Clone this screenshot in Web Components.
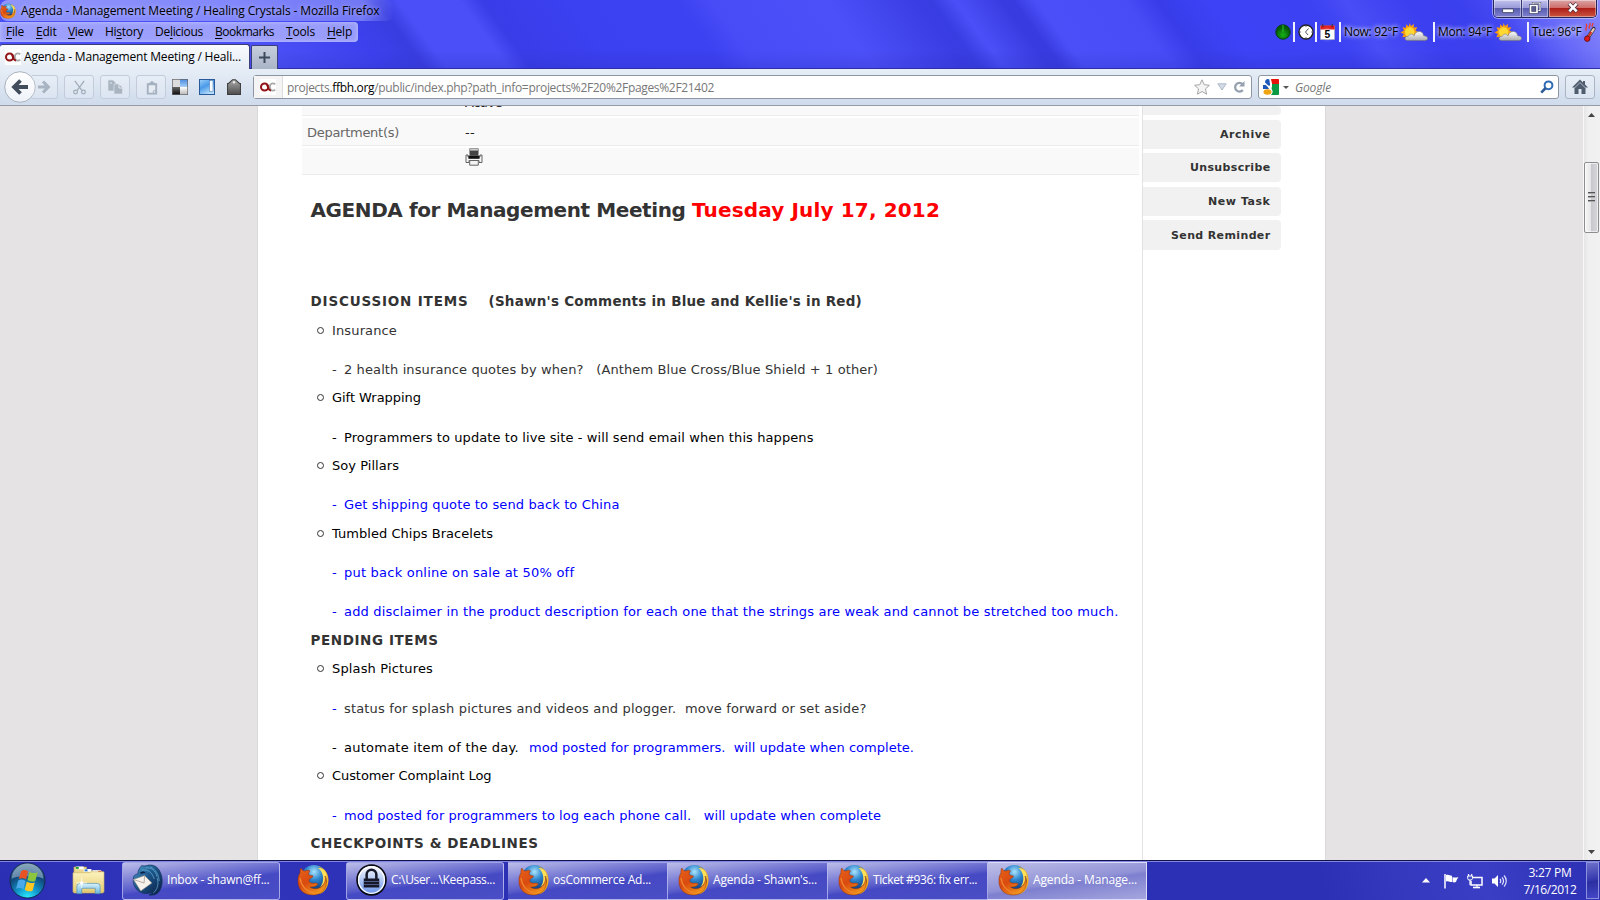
<!DOCTYPE html>
<html lang="en">
<head>
<meta charset="utf-8">
<title>Agenda - Management Meeting / Healing Crystals - Mozilla Firefox</title>
<style>
html,body{margin:0;padding:0;width:1600px;height:900px;overflow:hidden;background:#fff}
body{font-family:"Open Sans","Noto Sans",sans-serif;font-size:12px;color:#000}
</style>
</head>
<body>
<desktop-screen></desktop-screen>
<script>
const define=(name,html,setup)=>customElements.define(name,class extends HTMLElement{
  connectedCallback(){
    if(this.shadowRoot)return;
    const t=document.createElement('template');
    t.innerHTML=typeof html==='function'?html(this):html;
    this.attachShadow({mode:'open'}).appendChild(t.content.cloneNode(true));
    if(setup)setup(this);
  }
});

/* Text set to a given advance width by adjusting its tracking. */
define('fit-text',`<style>:host{display:inline-block;white-space:pre;flex:none}</style><span><slot></slot></span>`,el=>{
  const w=+el.getAttribute('w'),s=el.shadowRoot.querySelector('span');
  const n=el.textContent.length,cur=s.getBoundingClientRect().width;
  s.style.letterSpacing=((w-cur)/n)+'px';
  el.style.width=w+'px';
});

const icons={
firefox:['0 0 32 32',`<defs><radialGradient id="b" cx=".5" cy=".25" r=".75"><stop offset="0" stop-color="#a9e4fb"/><stop offset=".4" stop-color="#2f86cf"/><stop offset="1" stop-color="#0a2a66"/></radialGradient><linearGradient id="o" x1="0" y1="0" x2=".7" y2="1"><stop offset="0" stop-color="#e8631a"/><stop offset=".5" stop-color="#d94a10"/><stop offset="1" stop-color="#f39a1d"/></linearGradient></defs>
<circle cx="17" cy="14.500" r="13.500" fill="url(#b)"/><path d="M20 2c6 2 9 6 9.500 12 .5 9-5 15-13 15 9 4 15-5 15-13C31.500 9 27 3 20 2z" fill="#f6b21c"/><path d="M21 4c6 4 7 14 2 19 5-2 8-8 6-14-1-3-4-5-8-5z" fill="#ffe05a"/>
<path d="M4 4c1 2 2 3 4 3 2-1 4-1 5 0-1 1-2 3-1 4l4 1c0 2-3 2-4 4 0 2 1 3 3 3 2 1 3-1 6 1-2 3-6 3-8 3 4 3 10 2 13-2 2-3 3-5 2-9 4 9-1 19-12 19C5 31 .5 24 1 16c0-4 1-5 2-7 0-2 0-4 1-5z" fill="url(#o)" stroke="#8f2c08" stroke-width=".5"/><path d="M3 14c1 7 5 13 14 15" fill="none" stroke="#f58b34" stroke-width="1.200"/>`],
oc:['0 0 16 16',`<rect width="16" height="16" fill="#fff"/><path d="M15.300 5.300C13 3.600 9.800 4.300 9.800 8s3.200 4.400 5.500 2.700" fill="none" stroke="#aaa" stroke-width="1.900"/><ellipse cx="4.600" cy="8" rx="3.600" ry="3.500" fill="none" stroke="#921417" stroke-width="2"/><path d="M7 5.500c1 2.500 1.200 6 4 6" fill="none" stroke="#921417" stroke-width="1.900"/>`],
back:['0 0 32 32',`<defs><linearGradient id="g" x2="0" y2="1"><stop stop-color="#fff"/><stop offset="1" stop-color="#eef2f8"/></linearGradient></defs><circle cx="16" cy="16" r="15.300" fill="url(#g)" stroke="#aab2bf"/><path d="M24 16H10M16.500 9.500L10 16l6.500 6.500" fill="none" stroke="#414d5c" stroke-width="3.800"/>`],
fwd:['0 0 12 14',`<path d="M0 7h9M5 1.500L10.300 7 5 12.500" fill="none" stroke="#a8b4c2" stroke-width="3.200"/>`],
cut:['0 0 16 16',`<g fill="none" stroke="#9fabb9" stroke-width="1.300"><path d="M3 1l7.500 10M13 1L5.500 11"/><circle cx="3.800" cy="12.800" r="2"/><circle cx="12.200" cy="12.800" r="2"/></g>`],
copy:['0 0 16 16',`<g fill="#a9b4c1" stroke="#dde4ee" stroke-width=".7"><path d="M1 1h5l3 3v8H1z"/><path d="M7 5h5l3.500 3.500V15H7z"/></g><path d="M12 5v4h3.500M3 4h2" stroke="#e4eaf2" fill="none"/>`],
paste:['0 0 16 16',`<path d="M4 4.500h9v10H4z" fill="#e6ecf4" stroke="#a5b0be" stroke-width="2"/><path d="M5 4c0-1 1-1 2-1.500C7 .8 10 .8 10 2.500c1 .5 2 .5 2 1.500v1H5z" fill="#a5b0be"/><path d="M10 14.500v-3h3" fill="none" stroke="#a5b0be"/>`],
deli:['0 0 16 16',`<defs><linearGradient id="a" x2="0" y2="1"><stop stop-color="#fff"/><stop offset="1" stop-color="#bbb"/></linearGradient><linearGradient id="c" x2="0" y2="1"><stop stop-color="#4f8ee0"/><stop offset="1" stop-color="#a6d0fa"/></linearGradient><linearGradient id="d" x2="0" y2="1"><stop stop-color="#666"/><stop offset="1" stop-color="#111"/></linearGradient></defs><path d="M0 0h16v16H0z" fill="#666"/><path d="M.7.7H8V8H.7z" fill="#dcdcdc"/><path d="M8 .7h7.300V8H8z" fill="url(#c)"/><path d="M.7 8H8v7.300H.7z" fill="url(#d)"/><path d="M8 8h7.300v7.300H8z" fill="url(#a)"/>`],
side:['0 0 16 16',`<defs><linearGradient id="a" x2=".5" y2="1"><stop stop-color="#9fd0fa"/><stop offset=".5" stop-color="#4a9ae8"/><stop offset="1" stop-color="#b5dcfa"/></linearGradient></defs><rect x=".5" y=".5" width="15" height="15" fill="url(#a)" stroke="#27599b"/><rect x="10.500" y="1.500" width="3.500" height="11" fill="#f4faff" stroke="#3b6fae" stroke-width=".5"/>`],
tag:['0 0 15 16',`<defs><linearGradient id="a" x2="0" y2="1"><stop stop-color="#aaa"/><stop offset="1" stop-color="#4c4c4c"/></linearGradient></defs><path d="M.6 4.500h1L6 .7h3l4.400 3.800h1v11H.6z" fill="url(#a)" stroke="#3c3c3c" stroke-width="1.100"/><circle cx="7.500" cy="3.300" r="1.200" fill="#eee"/>`],
star:['0 0 16 16',`<path d="M8 .8l2.200 4.900 5.200.6-3.900 3.600 1.100 5.300L8 12.500l-4.600 2.700 1.100-5.300L.6 6.300l5.200-.6z" fill="#f4f4f4" stroke="#a6a6a6"/>`],
dd:['0 0 10 8',`<path d="M.8.800h8.400L5 7z" fill="#d2dbe6" stroke="#a8b4c4" stroke-width=".9"/>`],
reload:['0 0 12 12',`<path d="M9.500 3.200A4.300 4.300 0 1 0 9.800 9" fill="none" stroke="#94a0ae" stroke-width="2.300"/><path d="M11.500 0v5.500H6z" fill="#94a0ae"/>`],
google:['0 0 16 16',`<rect width="16" height="16" fill="#fff"/><path d="M8 0h7c.6 0 1 .4 1 1v4H9z" fill="#e8120c"/><path d="M9 5h7v10c0 .6-.4 1-1 1H8c4-4-1-6 1-8z" fill="#0b9a43"/><path d="M0 6h4l2 4H0z" fill="#1d58b8"/><ellipse cx="5" cy="3.500" rx="3" ry="3.600" fill="#1d58b8"/><path d="M2 4c2 4 4 2 5 6M7 0l1 7" stroke="#fff" stroke-width="1.500" fill="none"/><ellipse cx="4.500" cy="13" rx="4" ry="2.700" fill="#efa414"/>`],
caret:['0 0 6 3',`<path d="M0 0h6L3 3z" fill="#555"/>`],
mag:['0 0 14 14',`<circle cx="8.500" cy="5.300" r="3.900" fill="none" stroke="#2f6cb4" stroke-width="2"/><path d="M5.700 8L1.200 12.600" stroke="#2f5a94" stroke-width="2.600"/>`],
home:['0 0 16 16',`<path d="M8 .5L0 8.500h2.500V15h4v-5h3v5h4V8.500H16l-3-3V2h-2v1.500z" fill="#4f5d6e"/><path d="M8 3.500L2.500 9M8 3.500L13.500 9" stroke="#c3ccd7" stroke-width=".8" fill="none"/>`],
green:['0 0 16 16',`<defs><radialGradient id="a" cy=".7"><stop stop-color="#16b416"/><stop offset="1" stop-color="#055c08"/></radialGradient></defs><circle cx="8" cy="8" r="7.200" fill="url(#a)" stroke="#053f12"/><path d="M8 8V1" stroke="#2fc42f" stroke-width="1"/>`],
clock:['0 0 16 16',`<circle cx="8" cy="8" r="7" fill="#fff" stroke="#222" stroke-width="1.300"/><path d="M10.500 4.500L7.500 8l2.500 3" fill="none" stroke="#555"/><g fill="#666"><path d="M7.500 2h1v1h-1zM7.500 13h1v1h-1zM2 7.500h1v1H2zM13 7.500h1v1h-1z"/></g>`],
cal:['0 0 16 16',`<rect x=".5" y="2" width="15" height="13.500" fill="#fff" stroke="#aaa" stroke-width=".6"/><path d="M.5 1.500h15v4H.5z" fill="#e01616"/><path d="M3 0v3M13 0v3" stroke="#333"/><text x="8" y="14" font-size="11" font-weight="700" text-anchor="middle" font-family="Liberation Sans,sans-serif">5</text>`],
sun:['0 0 30 20',`<defs><linearGradient id="a" x2="0" y2="1"><stop stop-color="#fff"/><stop offset="1" stop-color="#aaa"/></linearGradient></defs><path d="M10 0l1.300 3.200L14.500 1l-.3 3.700L18 4.500 16 8l3.500 2-3.500 2 1 3.500-3.500-.8L12 18l-2.500-2.700L6.500 18 6 14.500l-3.700.5L4 11.700.5 10 4 8 2.500 4.600l3.600.3L6.500 1.300 9 3.700z" fill="#f79d12"/><circle cx="10" cy="9.500" r="5" fill="#ffd931"/><path d="M8 18.500c-4 0-3.500-5 .5-4.500 1-3 5-3 6-.5 1.500-6 9.500-6 10 0 5 0 5.500 5 1 5z" fill="url(#a)" stroke="#777" stroke-width=".6"/>`],
thermo:['0 0 13 20',`<path d="M2.500 8c-2-3 2-4 0-7M6 6c-2-2 1.500-3 .5-6M9 4c-1-1 1-2 .5-4" fill="none" stroke="#f13a24" stroke-width="1.400"/><path d="M3.500 16.500L10.500 6" stroke="#333" stroke-width="4" stroke-linecap="round"/><path d="M4 15.500L10.500 6.500" stroke="#f0c8b8" stroke-width="2.400" stroke-linecap="round"/><path d="M4 15.500l4-6" stroke="#d8241b" stroke-width="2"/><circle cx="3.500" cy="16.500" r="2.900" fill="#e31818" stroke="#611"/>`],
printer:['0 0 18 18',`<path d="M4.700.7h8.600v6H4.700z" fill="#ddd" stroke="#888"/><path d="M5 2.500h8v5H5z" fill="#444"/><path d="M1 7h2v2h12V7h2v7.500h-3v-2H4v2H1z" fill="#f4f4f4" stroke="#555" stroke-width=".9"/><path d="M3.500 7.500h11v3.300h-11z" fill="#111"/><path d="M4.700 12.500h8.600v4.700H4.700z" fill="#f4f4f4" stroke="#666"/>`],
orb:['0 0 38 38',`<defs><radialGradient id="a" cx=".5" cy="1" r=".95"><stop stop-color="#2ff0ff"/><stop offset=".35" stop-color="#1197cc"/><stop offset=".7" stop-color="#11497d"/><stop offset="1" stop-color="#4b7a9a"/></radialGradient></defs><circle cx="19" cy="19" r="18" fill="url(#a)" stroke="#13284c"/><path d="M3 17a16 15.500 0 0 1 32 0c-6-3-26-3-32 0z" fill="#fff" opacity=".33"/><path d="M12.500 9.500c2-2 5-1.500 7 0l-2 8.500c-2-1.500-5-2-7.500-.5z" fill="#ea5223"/><path d="M21 10c2 1.500 5 2 8.500.5l-2.500 9c-2.500 1-5.500.5-8-1z" fill="#8cc63c"/><path d="M9.500 19c2.500-1.500 5-1 7.500.5l-2.200 8.500c-2-1.500-5-2-7.500-.5z" fill="#4aa9ea"/><path d="M18.300 20c2.500 1.500 5 2 8.200 1l-2.300 8.500c-2.500 1.200-6 .5-8-1z" fill="#fcc623"/>`],
folder:['0 0 34 32',`<defs><linearGradient id="a" x2="0" y2="1"><stop stop-color="#fcf3bd"/><stop offset="1" stop-color="#e6cc74"/></linearGradient><linearGradient id="b" x2="0" y2="1"><stop stop-color="#d9f2fb"/><stop offset="1" stop-color="#6cb5dd"/></linearGradient></defs><path d="M2 2h13v4h15l2 3v20H2z" fill="#ead78d" stroke="#b39c50" stroke-width=".6"/><path d="M4 1.500h8v3H4zM12 4h8v3h-8zM21 5.500h9v3h-9z" fill="#fff"/><path d="M4 2h3v2H4z" fill="#1aa02b"/><path d="M13 4.500h3v2h-3z" fill="#2474d8"/><path d="M27 6h3v2h-3z" fill="#d83a24"/><path d="M1 8h17l2-1h13v21H1z" fill="url(#a)" stroke="#c8b062" stroke-width=".6"/><path d="M5 29.500V22q0-3 3-3h18q3 0 3 3v7.500h-5V24H10v5.500z" fill="url(#b)" stroke="#4e93bd" stroke-width=".7"/><path d="M10 13v11M4.500 18.500h11" stroke="#fff" stroke-width=".8"/><circle cx="10" cy="18.500" r="1.800" fill="#fff"/>`],
bird:['0 0 32 32',`<defs><linearGradient id="a" x2="1" y2="1"><stop stop-color="#4f9fd0"/><stop offset=".45" stop-color="#1b5488"/><stop offset="1" stop-color="#0a1b40"/></linearGradient></defs><path d="M10 1.500c2 .5 3 .5 5 0C21 0 27 2 29.500 9c4 9 0 18-3 20-2 2-6 2.500-9 2 2-1 3-2 3-3-6 3-12 1-15-2C2 23 0 17 2 12c1-1 2-2 4-2 0-4 2-6 4-8.500z" fill="url(#a)" stroke="#0c2c54" stroke-width=".6"/><path d="M14 4c6-1 10 2 12 9M19 3c5 2 9 8 9 14M10 6c7-1 11 3 13 9M26 14c2 6 0 12-4 15" fill="none" stroke="#6bb4dc" stroke-width=".7"/><path d="M1.500 15.500L13 11.500 20.500 19 9 27z" fill="#f7f2ec" stroke="#8f8880" stroke-width=".6"/><path d="M1.500 15.500l11 3.500.5-7.500" fill="none" stroke="#a59c92" stroke-width=".8"/><path d="M8 9c2-2 5-2 6 0-2 0-4 1.500-6 0z" fill="#0b2148"/>`],
lock:['0 0 32 32',`<defs><linearGradient id="a" x2="0" y2="1"><stop stop-color="#fff"/><stop offset="1" stop-color="#648fea"/></linearGradient></defs><circle cx="16" cy="16" r="14.900" fill="url(#a)" stroke="#0a0a12" stroke-width="1.700"/><circle cx="16" cy="16" r="13.300" fill="none" stroke="#fff" stroke-width="1.300"/><path d="M11 15v-4.500a5 4.800 0 0 1 10 0V15" fill="none" stroke="#17192b" stroke-width="2.600"/><path d="M8 14.500h16v9H8z" fill="#17192b"/><path d="M8 17.500h16M8 20.500h16" stroke="#667cb0" stroke-width=".7"/>`],
up:['0 0 8 5',`<path d="M4 0L8 4.500H0z" fill="#fff"/>`],
sup:['0 0 7 4',`<path d="M3.500 0L7 4H0z" fill="#444"/>`],
sdown:['0 0 7 4',`<path d="M0 0h7L3.500 4z" fill="#444"/>`],
flag:['0 0 16 16',`<path d="M2 1v14.500" stroke="#fff" stroke-width="1.500"/><path d="M3 2c3-1 4 1 6 .7V9c-2 .3-3-1.500-6-.5zM9.500 4c2 1 4 .5 6 0-1.500 2-2 3.500-2.500 5-1.500.5-2.500.5-3.500 0z" fill="#fff"/>`],
net:['0 0 16 16',`<path d="M6 4.500h9v7.500H4V8" fill="none" stroke="#fff" stroke-width="1.500"/><path d="M6 14.500h7" stroke="#fff" stroke-width="1.600"/><path d="M10 12v2M3 6.500V12M1.500 1v2.500M4.700 1v2.500" stroke="#fff" stroke-width="1.200"/><path d="M.7 3h4.800v2.500L4.500 7h-3L.7 5.500z" fill="#4450c4" stroke="#fff"/>`],
vol:['0 0 16 16',`<path d="M1 5.500h2.500L7 2v12l-3.500-3.500H1z" fill="#fff"/><path d="M9 6c1 1 1 3 0 4M11 4.300c2 2 2 5.400 0 7.400M13 2.500c3 3 3 8 0 11" fill="none" stroke="#e5e6ff" stroke-width="1.200"/>`],
min:['0 0 12 6',`<rect x=".6" y=".9" width="10.800" height="3.800" rx=".5" fill="#fff" stroke="#44476a" stroke-width="1"/>`],
rest:['0 0 12 12',`<path d="M4 1h7v7.500H4z" fill="none" stroke="#3a3d60" stroke-width="2.200"/><path d="M4 1h7v7.500H4z" fill="none" stroke="#fff" stroke-width="1.200"/><path d="M1.500 3.500h6.500v7H1.500z" fill="#5a5d8e" stroke="#3a3d60" stroke-width="2.800"/><path d="M1.500 3.500h6.500v7H1.500z" fill="none" stroke="#fff" stroke-width="1.700"/>`],
close:['0 0 12 11',`<path d="M2 1.500l8 8M10 1.500l-8 8" stroke="#5b3540" stroke-width="4.200"/><path d="M2.300 1.700l7.400 7.600M9.700 1.700L2.300 9.300" stroke="#fff" stroke-width="2.600"/>`]
};
define('ui-icon',el=>{
  const [vb,body]=icons[el.getAttribute('n')];
  return `<style>:host{display:block;flex:none;width:${el.getAttribute('w')}px;height:${el.getAttribute('h')||el.getAttribute('w')}px}svg{display:block;width:100%;height:100%;overflow:visible}</style><svg viewBox="${vb}" preserveAspectRatio="none">${body}</svg>`;
});

define('title-bar',`<style>
:host{display:flex;height:21px;justify-content:space-between}
.t{display:flex;align-items:center;gap:5px;height:21px;padding-right:14px;border-radius:8px;background:linear-gradient(90deg,rgba(190,195,255,.6),rgba(165,170,255,.52) 92%,rgba(160,165,255,0));text-shadow:0 0 5px rgba(255,255,255,.5)}
.w{display:flex;margin-right:3px;height:18px;border:1px solid #24265a;border-top:0;border-radius:0 0 5px 5px;box-shadow:0 0 0 1px rgba(220,222,255,.55);overflow:hidden;box-sizing:border-box}
.w div{display:flex;justify-content:center;align-items:center;background:linear-gradient(#c1c2ee,#9a9bd8 45%,#5a5cae 50%,#7f81d0);box-shadow:inset 0 0 0 1px rgba(255,255,255,.4)}
.w .a{width:27px;border-right:1px solid #34366e}.w .b{width:26px;border-right:1px solid #34366e}.w .c{width:47px;background:linear-gradient(#dba5a8,#cf6d68 45%,#ad1f18 50%,#cc5540)}
.a ui-icon{margin-top:4px}.b ui-icon{margin-top:-2px}.c ui-icon{margin-top:-2px}
</style><div class="t"><ui-icon n="firefox" w="16"></ui-icon><fit-text w="358.500">Agenda - Management Meeting / Healing Crystals - Mozilla Firefox</fit-text></div>
<div class="w"><div class="a"><ui-icon n="min" w="12" h="6"></ui-icon></div><div class="b"><ui-icon n="rest" w="12"></ui-icon></div><div class="c"><ui-icon n="close" w="12" h="11"></ui-icon></div></div>`);

define('menu-bar',`<style>
:host{display:flex;height:20px;margin-top:1px;justify-content:space-between;align-items:center}
nav{display:flex;align-items:center;height:20px;box-sizing:border-box;width:358px;padding:0 0 2px 6px;border-radius:0 4px 4px 0;background:rgba(205,208,255,.63);box-shadow:inset 0 0 4px rgba(255,255,255,.4)}
u{text-underline-offset:2px}
.s{display:flex;align-items:center;height:20px;width:325px;text-shadow:0 0 5px #fff,0 0 4px rgba(255,255,255,.7)}
.s fit-text{margin-top:-1px}
i{flex:none;width:2px;height:20px;background:#f0f0ff}
</style><nav>
<fit-text w="18"><u>F</u>ile</fit-text><fit-text w="20.500" style="margin-left:12px"><u>E</u>dit</fit-text><fit-text w="25" style="margin-left:11.500px"><u>V</u>iew</fit-text><fit-text w="38" style="margin-left:12px">Hi<u>s</u>tory</fit-text><fit-text w="48" style="margin-left:12px">De<u>l</u>icious</fit-text><fit-text w="59" style="margin-left:12px"><u>B</u>ookmarks</fit-text><fit-text w="29" style="margin-left:12px"><u>T</u>ools</fit-text><fit-text w="25" style="margin-left:12px"><u>H</u>elp</fit-text></nav>
<div class="s"><ui-icon n="green" w="16"></ui-icon><i style="margin:0 3px 0 2px"></i><ui-icon n="clock" w="16"></ui-icon><i style="margin:0 3px 0 1px"></i><ui-icon n="cal" w="15" h="16"></ui-icon><i style="margin:0 3px 0 4px"></i><fit-text w="54">Now: 92°F</fit-text><ui-icon n="sun" w="29" h="19" style="margin-left:2px"></ui-icon><i style="margin:0 3px 0 4px"></i><fit-text w="54">Mon: 94°F</fit-text><ui-icon n="sun" w="29" h="19" style="margin-left:2px"></ui-icon><i style="margin:0 3px 0 4px"></i><fit-text w="49.500">Tue: 96°F</fit-text><ui-icon n="thermo" w="12" h="19" style="margin-left:2px"></ui-icon></div>`);

define('tab-strip',`<style>
:host{display:flex;height:26px;margin-top:1px;align-items:flex-end;box-shadow:inset 0 -1px #2c2fa6}
.t{display:flex;align-items:center;gap:3px;width:250px;height:25px;box-sizing:border-box;padding-left:5px;border:1px solid #3b3e79;border-left:0;border-bottom:0;border-radius:3px 3px 0 0;background:linear-gradient(#f9fbfd,#e5ecf5)}
.t fit-text{margin-top:-1px}
.n{display:flex;align-items:center;justify-content:center;width:27px;height:24px;margin-left:1px;box-sizing:border-box;border:1px solid #3b3e79;border-bottom:0;background:linear-gradient(#c6cedd,#a9b4c7);border-radius:2px 2px 0 0}
</style><div class="t"><ui-icon n="oc" w="16"></ui-icon><fit-text w="217">Agenda - Management Meeting / Heali...</fit-text></div><div class="n"><svg width="11" height="11"><path d="M5.500 0v11M0 5.500h11" stroke="#3d4a5b" stroke-width="2"/></svg></div>`);

define('nav-bar',`<style>
:host{display:flex;align-items:center;height:37px;box-sizing:border-box;border-bottom:1px solid #979ba5;background:linear-gradient(#e6edf6,#cfdbec);color:#777}
.k{display:flex;align-items:center;justify-content:center;width:30px;height:24px;box-sizing:border-box;border:1px solid #c3ccda;border-radius:3px;background:rgba(255,255,255,.18);flex:none}
.f{width:26px;border-left:0;border-radius:0 3px 3px 0;margin-left:-4px;padding-right:2px}
.u{display:flex;align-items:center;height:24px;box-sizing:border-box;border:1px solid #8f96a3;border-radius:3px;background:#fff;flex:none}
.o{display:flex;align-items:center;justify-content:center;width:29px;height:22px;background:#f4f4f4;border-right:1px solid #ddd;box-sizing:border-box}
b{font-weight:400;color:#000}
</style><ui-icon n="back" w="32" style="margin-left:4px"></ui-icon><div class="k f"><ui-icon n="fwd" w="12" h="14"></ui-icon></div>
<div class="k" style="margin-left:6px"><ui-icon n="cut" w="15"></ui-icon></div><div class="k" style="margin-left:6px"><ui-icon n="copy" w="16"></ui-icon></div><div class="k" style="margin-left:6px"><ui-icon n="paste" w="15"></ui-icon></div>
<ui-icon n="deli" w="16" style="margin-left:6px"></ui-icon><ui-icon n="side" w="16" style="margin-left:11px"></ui-icon><ui-icon n="tag" w="14" h="16" style="margin-left:12px"></ui-icon>
<div class="u" style="margin-left:12px;width:999px"><div class="o"><ui-icon n="oc" w="16"></ui-icon></div><fit-text w="427" style="margin-left:4px">projects.<b>ffbh.org</b>/public/index.php?path_info=projects%2F20%2Fpages%2F21402</fit-text>
<ui-icon n="star" w="16" style="margin-left:auto"></ui-icon><ui-icon n="dd" w="10" h="8" style="margin-left:7px"></ui-icon><ui-icon n="reload" w="12" style="margin:0 6px 0 6px"></ui-icon></div>
<div class="u" style="margin-left:6px;width:301px"><ui-icon n="google" w="16" style="margin-left:4px"></ui-icon><ui-icon n="caret" w="6" h="3" style="margin-left:4px"></ui-icon><fit-text w="36" style="margin-left:6px;font-style:italic">Google</fit-text><ui-icon n="mag" w="14" style="margin:0 4px 0 auto"></ui-icon></div>
<div class="k" style="margin-left:6px;border-color:#aab4c4"><ui-icon n="home" w="16"></ui-icon></div>`);

define('browser-chrome',`<style>
:host{display:block;height:106px;overflow:hidden;font-size:12px;background:
linear-gradient(54deg,rgba(150,150,255,0) 35%,rgba(150,150,255,.75)) 1480px 0/120px 70px no-repeat,
linear-gradient(180deg,rgba(40,45,180,0) 50px,rgba(40,45,180,.22) 69px),
linear-gradient(54deg,#4b50f6 0,#4b50f6 250px,#3c41ee 330px,#383de0 366px,#4a4ff7 384px,#4a4ff7 434px,#393de8 452px,#3b40f0 520px,#3c41f1 608px,#474cf7 636px,#4c50f8 730px,#393de3 803px,#383de2 815px,#4a4ff7 835px,#383ce0 872px,#383ce0 882px,#4a4ff8 900px,#474cf7 972px,#383de9 998px,#3d42f6 1040px,#3c41f2 1120px,#484df6 1150px,#3b3fef 1200px,#3b40ee 1240px,#4f53f5 1300px,#6063f4)}
</style><title-bar></title-bar><menu-bar></menu-bar><tab-strip></tab-strip><nav-bar></nav-bar>`);

define('side-button',el=>`<style>:host{display:flex;align-items:center;justify-content:flex-end;height:${el.getAttribute('h')||29}px;width:138px;box-sizing:border-box;padding-right:10.500px;background:#f1f1f1;border-radius:0 4px 4px 0;font:bold 11px "DejaVu Sans",sans-serif;color:#333}</style><slot></slot>`);

define('info-row',`<style>:host{display:flex;box-sizing:border-box;padding-left:5px;background:#f9f9f9;border-bottom:1px solid #ececec;color:#666}.l{width:158px;flex:none}.v{color:#222}</style><div class="l"><slot name="label"></slot></div><div class="v"><slot></slot></div>`);

/* h: distance from the previous baseline; level: 0 heading, 1 bullet, 2 note with a leading dash */
define('agenda-line',el=>{
  const l=el.getAttribute('level'),c=el.getAttribute('color')||'#000';
  const lead=l==='1'?'<i></i>':l==='2'?'<fit-text class="d" w="12">- </fit-text>':'';
  return `<style>:host{display:flex;align-items:flex-end;height:${el.getAttribute('h')}px;line-height:20px;white-space:pre;color:${l==='0'?'#333':c};font-weight:${l==='0'?700:400};font-size:${l==='0'?13.5:13}px;padding-left:${l==='0'?0:l==='1'?6.5:21.5}px}
i{flex:none;width:5px;height:5px;border:1px solid #333;border-radius:50%;margin:0 8px 7px 0}.d{color:${el.getAttribute('dash')||c}}</style>${lead}<slot></slot>`;
});

define('page-main',`<style>
:host{display:block;width:1069px;box-sizing:border-box;background:#fff;border-left:1px solid #d9d9d9;border-right:1px solid #dadada;overflow:hidden;font:13px "DejaVu Sans",sans-serif}
.c{display:flex}
.l{width:885px;box-sizing:border-box;padding-left:44px;border-right:1px solid #e2e2e2;height:754px;overflow:hidden}
.t{width:837px;display:flex;flex-direction:column;gap:2px}
.g{padding-left:8.500px}
h1{margin:0;height:49px;display:flex;align-items:flex-end;font-size:20px;line-height:28px;color:#333}
em{font-style:normal;color:#f00}
.r{display:flex;flex-direction:column;gap:5px}
.x{display:block;margin-top:-11px;line-height:16px}
</style><div class="c"><div class="l"><div class="t">
<info-row style="height:10px"><fit-text class="x" w="37">Active</fit-text></info-row>
<info-row style="height:28px;line-height:29px"><fit-text slot="label" w="92">Department(s)</fit-text><fit-text w="10">--</fit-text></info-row>
<info-row style="height:27px"><ui-icon n="printer" w="18"></ui-icon></info-row></div>
<div class="g"><h1><fit-text w="381.500">AGENDA for Management Meeting </fit-text><em><fit-text w="248">Tuesday July 17, 2012</fit-text></em></h1>
<agenda-line level="0" h="87"><fit-text w="158">DISCUSSION ITEMS</fit-text><fit-text w="373.500" style="margin-left:20px">(Shawn's Comments in Blue and Kellie's in Red)</fit-text></agenda-line>
<agenda-line level="1" h="30" color="#333"><fit-text w="65">Insurance</fit-text></agenda-line>
<agenda-line level="2" h="39" color="#333"><fit-text w="534">2 health insurance quotes by when?   (Anthem Blue Cross/Blue Shield + 1 other)</fit-text></agenda-line>
<agenda-line level="1" h="28"><fit-text w="89">Gift Wrapping</fit-text></agenda-line>
<agenda-line level="2" h="40"><fit-text w="469.500">Programmers to update to live site - will send email when this happens</fit-text></agenda-line>
<agenda-line level="1" h="28"><fit-text w="67">Soy Pillars</fit-text></agenda-line>
<agenda-line level="2" h="39" color="#00f"><fit-text w="275.500">Get shipping quote to send back to China</fit-text></agenda-line>
<agenda-line level="1" h="29"><fit-text w="161">Tumbled Chips Bracelets</fit-text></agenda-line>
<agenda-line level="2" h="39" color="#00f"><fit-text w="230">put back online on sale at 50% off</fit-text></agenda-line>
<agenda-line level="2" h="39" color="#00f"><fit-text w="774.500">add disclaimer in the product description for each one that the strings are weak and cannot be stretched too much.</fit-text></agenda-line>
<agenda-line level="0" h="28"><fit-text w="128">PENDING ITEMS</fit-text></agenda-line>
<agenda-line level="1" h="29"><fit-text w="101">Splash Pictures</fit-text></agenda-line>
<agenda-line level="2" h="40" color="#333" dash="#00f"><fit-text w="522.500">status for splash pictures and videos and plogger.  move forward or set aside?</fit-text></agenda-line>
<agenda-line level="2" h="39"><fit-text w="175">automate item of the day.</fit-text><fit-text w="385" style="margin-left:10px;color:#00f">mod posted for programmers.  will update when complete.</fit-text></agenda-line>
<agenda-line level="1" h="28"><fit-text w="159.500">Customer Complaint Log</fit-text></agenda-line>
<agenda-line level="2" h="40" color="#00f"><fit-text w="537">mod posted for programmers to log each phone call.   will update when complete</fit-text></agenda-line>
<agenda-line level="0" h="27"><fit-text w="228">CHECKPOINTS &amp; DEADLINES</fit-text></agenda-line>
</div></div>
<div class="r"><side-button h="9"></side-button><side-button><fit-text w="50.500">Archive</fit-text></side-button><side-button style="margin-top:-1px"><fit-text w="80.500">Unsubscribe</fit-text></side-button><side-button><fit-text w="62.500">New Task</fit-text></side-button><side-button style="margin-top:-1px" h="30"><fit-text w="99.500">Send Reminder</fit-text></side-button></div></div>`);

define('scroll-bar',`<style>
:host{display:flex;flex-direction:column;align-items:center;width:17px;box-sizing:border-box;padding-right:1px;border-left:1px solid #f8f8f8;background:linear-gradient(90deg,#e6e6e6,#f0f0f0 30%,#f1f1f1)}
.th{display:flex;flex-direction:column;gap:2px;align-items:center;justify-content:center;width:15px;height:71px;margin-top:45px;padding-bottom:2px;box-sizing:border-box;border:1px solid #8d8d8d;border-radius:2px;background:linear-gradient(90deg,#f7f7f7,#e6e6e8 45%,#c8c8ce 50%,#d6d6da);box-shadow:inset 0 0 0 1px rgba(255,255,255,.6)}
.th i{width:7px;height:1px;background:#555;border-bottom:1px solid #aaa}
</style><ui-icon n="sup" w="7" h="4" style="margin-top:7px"></ui-icon><div class="th"><i></i><i></i><i></i></div><ui-icon n="sdown" w="7" h="4" style="margin:auto 0 6px"></ui-icon>`);

define('page-view',`<style>:host{display:flex;height:754px;overflow:hidden;background:#e5e3e3}page-main{margin-left:257px}scroll-bar{margin-left:auto}</style><page-main></page-main><scroll-bar></scroll-bar>`);

define('task-button',el=>`<style>
:host{display:flex;align-items:center;height:38px;width:${el.getAttribute('w')}px;box-sizing:border-box;padding-left:9px;gap:4px;color:#fff;border:1px solid rgba(190,192,240,.75);border-radius:3px;background:linear-gradient(172deg,rgba(255,255,255,.66),rgba(255,255,255,.16) 49%,rgba(255,255,255,.05) 56%,rgba(255,255,255,.08)),#3b3fc0;flex:none}
:host([grouped]){border-radius:0;border-left-width:0;padding-left:10px}
:host([active]){background:linear-gradient(172deg,rgba(255,255,255,.5),rgba(255,255,255,.14) 50%,rgba(255,255,255,0) 56%,rgba(255,255,255,.3)),#7e80d0;border-color:#dcdcfa}
::slotted(fit-text){margin-top:-2px}
ui-icon{margin-top:-1px}
</style><ui-icon n="${el.getAttribute('icon')}" w="31" h="32"></ui-icon><slot></slot>`);

define('task-bar',`<style>
:host{display:flex;align-items:center;height:40px;box-sizing:border-box;border-top:1px solid #10134c;box-shadow:inset 0 1px #8286e0;background:linear-gradient(75deg,#2a2fb4 0,#3035bc 200px,#2b30b5 420px,#2b30b5 1280px,#3438bd 1350px,#3a3ec4 1440px,#2e33b7 1530px,#2b30b0);color:#fff;font-size:12px}
.g{display:flex;margin-left:4px}
.d{display:flex;flex-direction:column;align-items:center;width:54px;margin-left:16px;line-height:17px;margin-top:0}
.e{width:13px;height:37px;box-sizing:border-box;border:1px solid #8d90dd;margin:0 1px 0 auto;background:linear-gradient(170deg,#6d70c9,#3236ac 50%,#2a2e9e 52%,#4448c8)}
</style><ui-icon n="orb" w="37" style="margin:-1px 0 0 8.500px"></ui-icon><ui-icon n="folder" w="33" h="31" style="margin-left:26px"></ui-icon>
<task-button icon="bird" w="158" style="margin-left:17.500px"><fit-text w="102.500">Inbox - shawn@ff...</fit-text></task-button>
<ui-icon n="firefox" w="32" style="margin:-1px 0 0 17px"></ui-icon>
<task-button icon="lock" w="158" style="margin-left:17px"><fit-text w="104">C:\\User...\\Keepass...</fit-text></task-button>
<div class="g"><task-button grouped icon="firefox" w="160"><fit-text w="98">osCommerce Ad...</fit-text></task-button><task-button grouped icon="firefox" w="160"><fit-text w="104">Agenda - Shawn's...</fit-text></task-button><task-button grouped icon="firefox" w="160"><fit-text w="104">Ticket #936: fix err...</fit-text></task-button><task-button grouped active icon="firefox" w="159"><fit-text w="104">Agenda - Manage...</fit-text></task-button></div>
<ui-icon n="up" w="8" h="5" style="margin-left:275px"></ui-icon><ui-icon n="flag" w="16" style="margin-left:13px"></ui-icon><ui-icon n="net" w="16" style="margin-left:8px"></ui-icon><ui-icon n="vol" w="16" style="margin-left:8px"></ui-icon>
<div class="d"><fit-text w="43">3:27 PM</fit-text><fit-text w="53">7/16/2012</fit-text></div><div class="e"></div>`);

define('desktop-screen',`<style>:host{display:flex;flex-direction:column;width:1600px;height:900px;overflow:hidden}</style><browser-chrome></browser-chrome><page-view></page-view><task-bar></task-bar>`);
</script>
</body>
</html>
